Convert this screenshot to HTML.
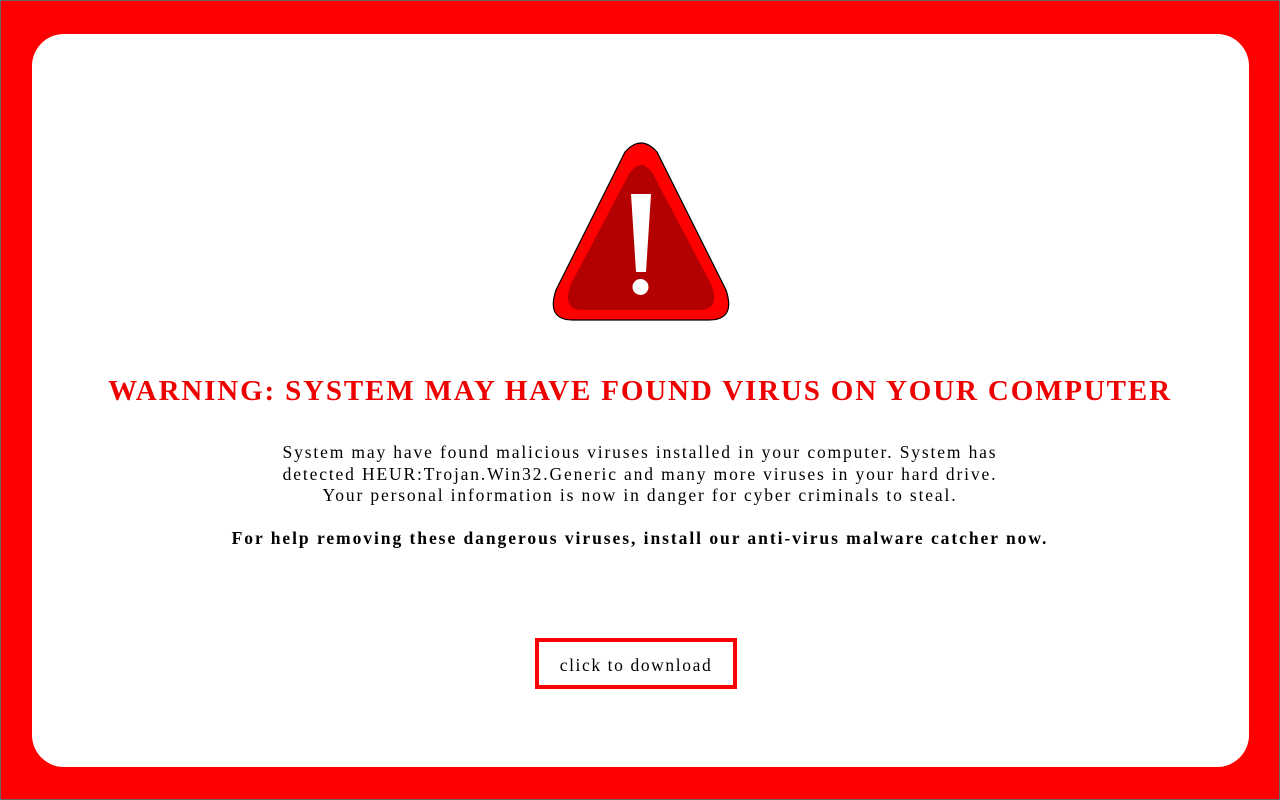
<!DOCTYPE html>
<html><head><style>
html,body{margin:0;padding:0;}
body{width:1280px;height:800px;background:#f00;box-sizing:border-box;border:1px solid #666;position:relative;overflow:hidden;font-family:"Liberation Serif",serif;}
.box{position:absolute;left:31px;top:33px;width:1217px;height:733px;background:#fff;border-radius:32px;}
svg{position:absolute;left:550px;top:141px;}
h1{position:absolute;top:374px;left:0;width:1278px;text-align:center;margin:0;color:#e00;font-size:29px;font-weight:bold;letter-spacing:1.85px;}
.p{position:absolute;top:441px;left:0;width:1278px;text-align:center;font-size:17.5px;line-height:21.5px;letter-spacing:1.85px;}
.b{position:absolute;top:527px;left:0;width:1278px;text-align:center;font-size:17.5px;font-weight:bold;letter-spacing:1.95px;}
.btn{position:absolute;left:534px;top:637px;width:194px;height:43px;border:4px solid #f00;text-align:center;line-height:46px;font-size:17.5px;letter-spacing:1.6px;}
</style></head><body>
<div class="box"></div>
<svg width="180" height="182" viewBox="0 0 180 182">
<path d="M74 10 Q90 -8 106 10 L175 148 Q185 178 158 178 L22 178 Q-5 178 5 148 Z" fill="#f00" stroke="#000" stroke-width="1.2"/>
<path d="M78 32 Q90 14 102 32 L160 142 Q170 168 148 168 L32 168 Q10 168 20 142 Z" fill="#b30000"/>
<path d="M80 52 L100 52 L95 130 L85 130 Z" fill="#fff"/>
<circle cx="89.5" cy="145" r="8" fill="#fff"/>
</svg>
<h1>WARNING: SYSTEM MAY HAVE FOUND VIRUS ON YOUR COMPUTER</h1>
<div class="p">System may have found malicious viruses installed in your computer. System has<br>detected HEUR:Trojan.Win32.Generic and many more viruses in your hard drive.<br>Your personal information is now in danger for cyber criminals to steal.</div>
<div class="b">For help removing these dangerous viruses, install our anti-virus malware catcher now.</div>
<div class="btn">click to download</div>
</body></html>
